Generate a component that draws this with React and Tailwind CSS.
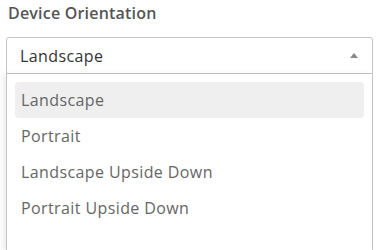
export default function App() {
  const items = ["Landscape", "Portrait", "Landscape Upside Down", "Portrait Upside Down"];
  return (
    <div className="w-[378px] h-[250px] bg-white overflow-hidden" style={{ fontFamily: "'Open Sans', sans-serif" }}>
      <div className="pt-[3px] pl-[8px] text-[16px] leading-[20px] font-semibold text-[#555] tracking-[0.2px]">
        Device Orientation
      </div>
      <div className="mt-[14px] ml-[6px] w-[367px]">
        <div className="h-[37px] border border-[#c4c4c4] rounded-t-[3px] flex items-center justify-between pl-[13px] pr-[14px]">
          <span className="text-[16px] text-[#333] tracking-[0.4px]">Landscape</span>
          <svg width="8" height="5" viewBox="0 0 8 5"><path d="M0 5 L4 0 L8 5 Z" fill="#8a8a8a" /></svg>
        </div>
        <div className="border border-t-0 border-[#c4c4c4] h-[177px] pt-[8px] px-[8px] shadow-[-3px_0_6px_rgba(0,0,0,0.08)]">
          {items.map((t, i) => (
            <div key={t} className={`h-[36px] flex items-center pl-[6px] text-[16px] tracking-[0.4px] text-[#666] rounded-[4px] ${i === 0 ? "bg-[#efefef]" : ""}`}>
              {t}
            </div>
          ))}
        </div>
      </div>
    </div>
  );
}
